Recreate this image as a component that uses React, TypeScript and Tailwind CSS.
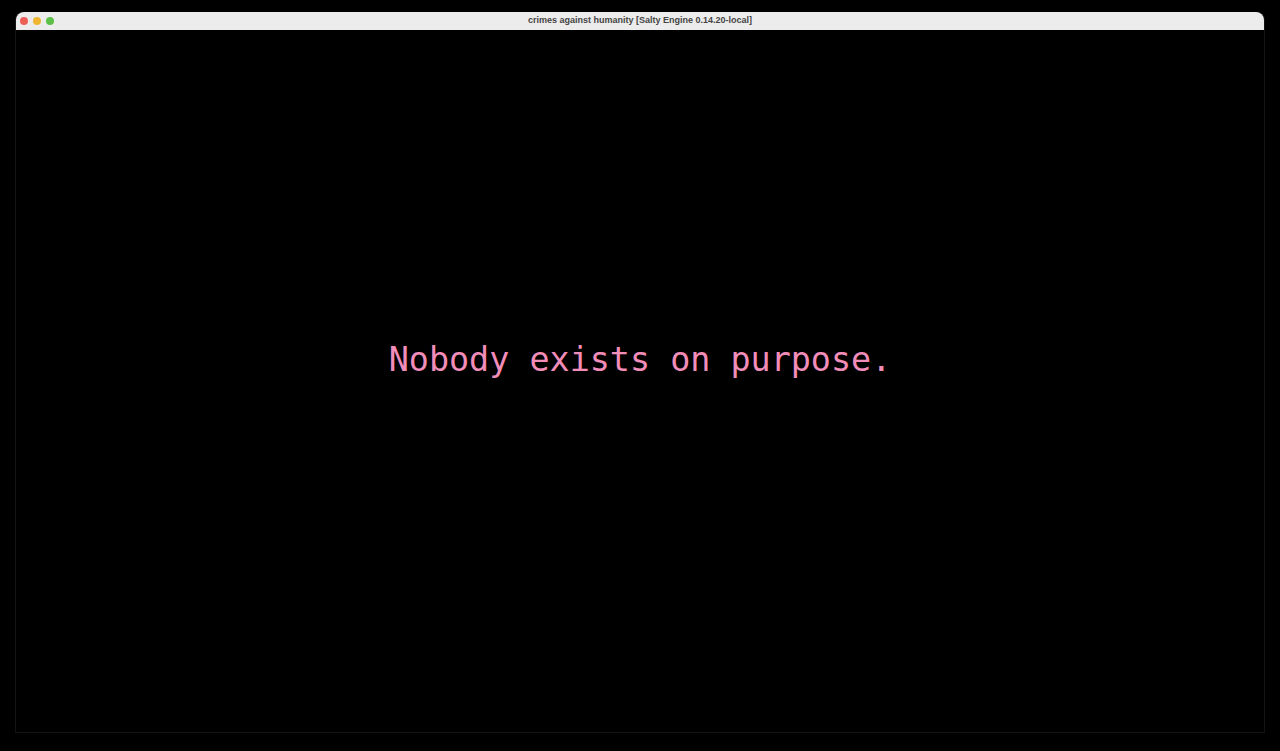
export default function App() {
  return (
    <div className="h-[751px] w-full bg-black pt-3 px-[15px]">
      <div className="flex h-[721px] flex-col rounded-t-[8px] border-x border-b border-[#141414]">
        {/* Title bar */}
        <div className="relative flex h-[18px] items-center justify-center rounded-t-[8px] bg-[#ececec]">
          <div className="absolute left-[4px] top-[5px] flex gap-[5px]">
            <span className="h-[8px] w-[8px] rounded-full bg-[#ec5f57]" />
            <span className="h-[8px] w-[8px] rounded-full bg-[#f0b632]" />
            <span className="h-[8px] w-[8px] rounded-full bg-[#5cc048]" />
          </div>
          <span className="font-['Liberation_Sans',Arial,sans-serif] text-[9px] font-bold text-[#444]">
            crimes against humanity [Salty Engine 0.14.20-local]
          </span>
        </div>

        {/* Content */}
        <div className="flex flex-1 justify-center bg-black pt-[310px]">
          <p className="font-['DejaVu_Sans_Mono',monospace] text-[33.4px] leading-[40px] text-[#f28dba]">
            Nobody exists on purpose.
          </p>
        </div>
      </div>
    </div>
  );
}
